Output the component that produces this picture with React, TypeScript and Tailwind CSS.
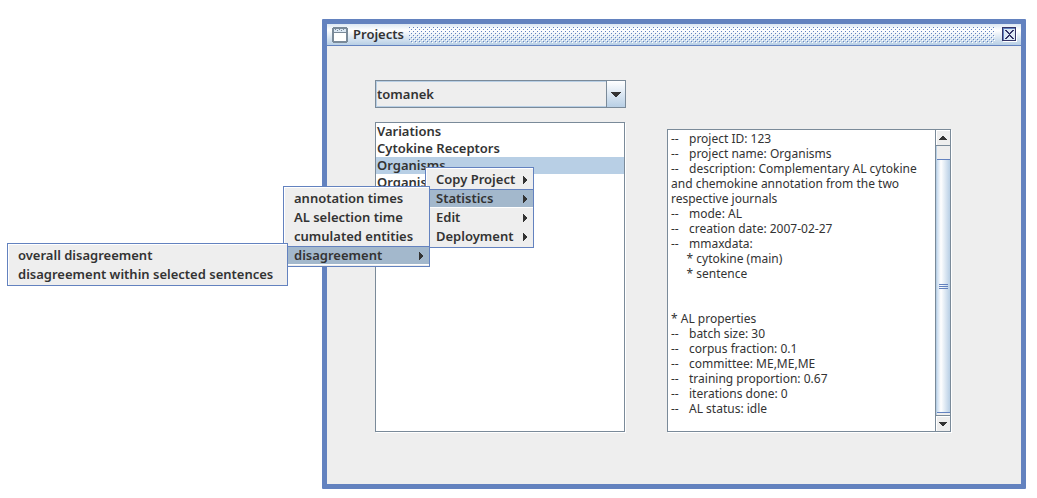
import type { ReactNode } from "react";

const users = ["tomanek"];
const projects = ["Variations", "Cytokine Receptors", "Organisms", "Organisms II"];

const details = `--\tproject ID: 123
--\tproject name: Organisms
--\tdescription: Complementary AL cytokine
and chemokine annotation from the two
respective journals
--\tmode: AL
--\tcreation date: 2007-02-27
--\tmmaxdata:
     * cytokine (main)
     * sentence


* AL properties
--\tbatch size: 30
--\tcorpus fraction: 0.1
--\tcommittee: ME,ME,ME
--\ttraining proportion: 0.67
--\titerations done: 0
--\tAL status: idle`;

function Menu({ className, label, children }: { className: string; label: string; children: ReactNode }) {
  return (
    <ul
      role="menu"
      aria-label={label}
      className={`absolute z-10 border border-[#6382bf] bg-[#eeeeee] pt-0.5 pb-px shadow-[inset_1px_1px_0_#ffffff] ${className}`}
    >
      {children}
    </ul>
  );
}

function MenuItem({ label, arrow, open, children }: { label: string; arrow?: boolean; open?: boolean; children?: ReactNode }) {
  return (
    <li role="none" className="relative">
      <button
        type="button"
        role="menuitem"
        aria-haspopup={arrow ? "menu" : undefined}
        aria-expanded={arrow ? !!open : undefined}
        className={`flex h-[19px] w-full items-center justify-between border-y pr-[5px] pl-2.5 whitespace-nowrap ${
          open ? "border-t-[#6382bf] border-b-white bg-[#a3b8cc]" : "border-transparent"
        }`}
      >
        {label}
        {arrow && (
          <svg width="5" height="8" viewBox="0 0 5 8" fill="#333333" shapeRendering="crispEdges" aria-hidden="true">
            <path d="M0 0h1v1h1v1h1v1h1v2h-1v1h-1v1h-1v1h-1z" />
          </svg>
        )}
      </button>
      {children}
    </li>
  );
}

function ScrollButton({ label, down }: { label: string; down?: boolean }) {
  return (
    <button
      type="button"
      aria-label={label}
      className={`flex h-4 shrink-0 items-center justify-center bg-[#eeeeee] shadow-[inset_1px_1px_0_#ffffff] ${
        down ? "border-t border-[#7a8a99]" : "border-b border-[#7a8a99]"
      }`}
    >
      <svg width="8" height="4" viewBox="0 0 8 4" fill="#333333" shapeRendering="crispEdges" aria-hidden="true">
        <path d={down ? "M0 0h8v1h-1v1h-1v1h-1v1h-2v-1h-1v-1h-1v-1h-1z" : "M3 0h2v1h1v1h1v1h1v1h-8v-1h1v-1h1v-1h1z"} />
      </svg>
    </button>
  );
}

export default function App() {
  return (
    <div className="overflow-hidden bg-white pt-[19px] pr-[11px] pb-[9px] pl-[322px] font-['Noto_Sans',sans-serif] text-[13px] leading-[17px] text-[#333333]">
      <main className="rounded-[1px] border-5 border-[#6382bf] bg-[#eeeeee]">
        <header className="flex h-[22px] items-center gap-[5px] border-b border-[#6382bf] bg-linear-to-b from-[#dde8f3] via-white via-30% to-[#b8cfe5] pr-1 pl-[5px]">
          <svg width="16" height="16" viewBox="0 0 16 16" shapeRendering="crispEdges" aria-hidden="true">
            <path d="M1 0h14v1h1v14h-1v1h-14v-1h-1v-14h1z" fill="#7a8a99" />
            <path d="M2 2h12v3h-12z" fill="#dbe7f3" />
            <path d="M3 2h1v1h-1zM5 3h1v1h-1zM7 2h1v1h-1zM9 3h1v1h-1zM11 2h1v1h-1z" fill="#7a8a99" />
            <path d="M2 6h12v8h-12z" fill="#ffffff" />
          </svg>
          <h1 className="font-semibold">Projects</h1>
          <svg className="h-4 flex-1" shapeRendering="crispEdges" aria-hidden="true">
            <defs>
              <pattern id="grip" width="4" height="4" patternUnits="userSpaceOnUse">
                <path d="M0 0h1v1h-1zM2 2h1v1h-1z" fill="#6382bf" />
                <path d="M1 1h1v1h-1zM3 3h1v1h-1z" fill="#ffffff" />
              </pattern>
            </defs>
            <rect width="100%" height="100%" fill="url(#grip)" />
          </svg>
          <button type="button" aria-label="Close" className="ml-0.5 flex size-[15px] items-center justify-center">
            <svg width="15" height="15" viewBox="0 0 15 15" shapeRendering="crispEdges" aria-hidden="true">
              <path d="M1 1h14v14h-14z" fill="#ffffff" />
              <path d="M0 0h14v14h-14z" fill="#333366" />
              <path d="M1 1h12v12h-12z" fill="#6382bf" />
              <path d="M2 2h11v11h-11z" fill="#dde8f3" />
              <path
                d="M3 3h2v1h1v1h1v1h1v-1h1v-1h1v-1h2v1h-1v1h-1v1h-1v1h-1v1h1v1h1v1h1v1h1v1h-2v-1h-1v-1h-1v-1h-1v1h-1v1h-1v1h-2v-1h1v-1h1v-1h1v-1h1v-1h-1v-1h-1v-1h-1v-1h-1z"
                fill="#333366"
              />
            </svg>
          </button>
        </header>

        <div className="grid grid-cols-[251fr_285fr] gap-x-[41px] pt-[34px] pr-[69px] pb-[52px] pl-12">
          <div className="flex flex-col gap-3.5 font-semibold">
            <div className="relative">
              <select
                aria-label="User"
                className="block h-7 w-full appearance-none border border-[#7a8a99] bg-[#eeeeee] pl-px font-semibold shadow-[inset_0_0_0_1px_#b8cfe5]"
              >
                {users.map((user) => (
                  <option key={user}>{user}</option>
                ))}
              </select>
              <span className="pointer-events-none absolute inset-y-px right-px flex w-[19px] items-center justify-center border-l border-[#7a8a99] bg-linear-to-b from-white to-[#b8cfe5]">
                <svg width="10" height="5" viewBox="0 0 10 5" fill="#333333" shapeRendering="crispEdges" aria-hidden="true">
                  <path d="M0 0h10v1h-1v1h-1v1h-1v1h-1v1h-2v-1h-1v-1h-1v-1h-1v-1h-1z" />
                </svg>
              </span>
            </div>

            <ul aria-label="Projects" className="mr-px flex-1 border border-[#7a8a99] bg-white shadow-[1px_1px_0_#ffffff]">
              {projects.map((project, index) => (
                <li key={project} className="relative">
                  <button
                    type="button"
                    aria-pressed={index === 2}
                    className={`block h-[17px] w-full pl-px text-left ${index === 2 ? "bg-[#b8cfe5]" : ""}`}
                  >
                    {project}
                  </button>
                  {index === 2 && (
                    <Menu label="Project actions" className="top-2.5 left-[49px] w-[109px]">
                      <MenuItem label="Copy Project" arrow />
                      <MenuItem label="Statistics" arrow open>
                        <Menu label="Statistics" className="-top-[3px] right-full -mr-1 w-[147px]">
                          <MenuItem label="annotation times" />
                          <MenuItem label="AL selection time" />
                          <MenuItem label="cumulated entities" />
                          <MenuItem label="disagreement" arrow open>
                            <Menu label="Disagreement" className="-top-[3px] right-full -mr-1 w-[281px]">
                              <MenuItem label="overall disagreement" />
                              <MenuItem label="disagreement within selected sentences" />
                            </Menu>
                          </MenuItem>
                        </Menu>
                      </MenuItem>
                      <MenuItem label="Edit" arrow />
                      <MenuItem label="Deployment" arrow />
                    </Menu>
                  )}
                </li>
              ))}
            </ul>
          </div>

          <div className="pt-[49px] pr-px">
            <div className="flex border border-[#7a8a99] bg-white shadow-[1px_1px_0_#ffffff]">
              <textarea
                aria-label="Project details"
                readOnly
                rows={20}
                value={details}
                className="block min-w-0 flex-1 resize-none overflow-hidden bg-white pt-px pl-[3px] text-xs leading-[15px] outline-none [tab-size:18px]"
              />
              <div className="flex w-[15px] flex-col border-l border-[#7a8a99] bg-[#eeeeee]">
                <ScrollButton label="Scroll up" />
                <div className="flex flex-1 flex-col border-l border-[#b8cfe5] pt-[13px] pb-0.5">
                  <div className="flex flex-1 flex-col items-center justify-center gap-px border-y border-[#6382bf] bg-linear-to-r from-[#c8dbee] via-white via-30% to-[#b8cfe5]">
                    <span className="h-px w-[9px] bg-[#6382bf]" />
                    <span className="h-px w-[9px] bg-[#6382bf]" />
                    <span className="h-px w-[9px] bg-[#6382bf]" />
                  </div>
                </div>
                <ScrollButton label="Scroll down" down />
              </div>
            </div>
          </div>
        </div>
      </main>
    </div>
  );
}
